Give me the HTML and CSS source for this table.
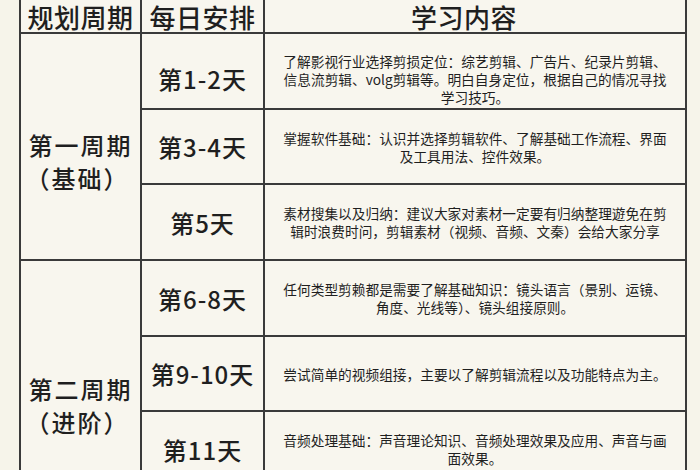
FILE: index.html
```html
<!DOCTYPE html>
<html lang="zh-CN">
<head>
<meta charset="utf-8">
<title>剪辑学习计划</title>
<link rel="stylesheet" href="styles.css">
</head>
<body>
<div class="plan">
  <div class="cell head">规划周期</div>
  <div class="cell head">每日安排</div>
  <div class="cell head head-content">学习内容</div>

  <div class="cell week week-one"><span>第一周期</span><span class="paren">（基础）</span></div>
  <div class="cell day first">第1-2天</div>
  <div class="cell content first">了解影视行业选择剪损定位：综艺剪辑、广告片、纪录片剪辑、<br>信息流剪辑、volg剪辑等。明白自身定位，根据自己的情况寻找<br>学习技巧。</div>
  <div class="cell day">第3-4天</div>
  <div class="cell content">掌握软件基础：认识并选择剪辑软件、了解基础工作流程、界面<br>及工具用法、控件效果。</div>
  <div class="cell day">第5天</div>
  <div class="cell content">素材搜集以及归纳：建议大家对素材一定要有归纳整理遊免在剪<br>辑时浪费时问，剪辑素材（视频、音频、文秦）会给大家分享</div>

  <div class="cell week week-two"><span>第二周期</span><span class="paren">（进阶）</span></div>
  <div class="cell day">第6-8天</div>
  <div class="cell content">任何类型剪赖都是需要了解基础知识：镜头语言（景别、运镜、<br>角度、光线等）、镜头组接原则。</div>
  <div class="cell day">第9-10天</div>
  <div class="cell content">尝试简单的视频组接，主要以了解剪辑流程以及功能特点为主。</div>
  <div class="cell day">第11天</div>
  <div class="cell content">音频处理基础：声音理论知识、音频处理效果及应用、声音与画<br>面效果。</div>
</div>
</body>
</html>
```

FILE: styles.css
```css
html, body {
  margin: 0;
  padding: 0;
  background: #f6f4ea;
  overflow: hidden;
}

body {
  font-family: "Noto Sans CJK SC", "Noto Sans", sans-serif;
  color: #1f1f1f;
}

.plan {
  display: grid;
  grid-template-columns: 121px 123px 422px;
  grid-template-rows: 34px 76px 75px 76px 76px 75px 76px;
  margin: 0 0 0 19px;
  width: 666px;
  border-left: 2px solid #3a3a3a;
  background: #f8f6ee;
}

.cell {
  box-sizing: border-box;
  border-right: 2px solid #3a3a3a;
  border-bottom: 2px solid #3a3a3a;
  display: flex;
  align-items: center;
  justify-content: center;
  text-align: center;
}

.head {
  font-size: 26px;
  font-weight: 500;
  line-height: 28px;
  padding-top: 1px;
  letter-spacing: 0.5px;
}

.head-content {
  padding-right: 22px;
}

.week {
  grid-row: span 3;
  flex-direction: column;
  justify-content: flex-start;
  font-size: 24px;
  font-weight: 500;
  line-height: 33px;
  letter-spacing: 2px;
}

.week-one {
  padding-top: 94px;
}

.week-two {
  padding-top: 111px;
}

.paren {
  margin-right: 6px;
}

.day {
  font-size: 24px;
  font-weight: 500;
  letter-spacing: 1px;
}

.content {
  font-size: 13.7px;
  line-height: 18px;
  padding: 0 4px;
}

.first {
  padding-top: 15px;
}
```
